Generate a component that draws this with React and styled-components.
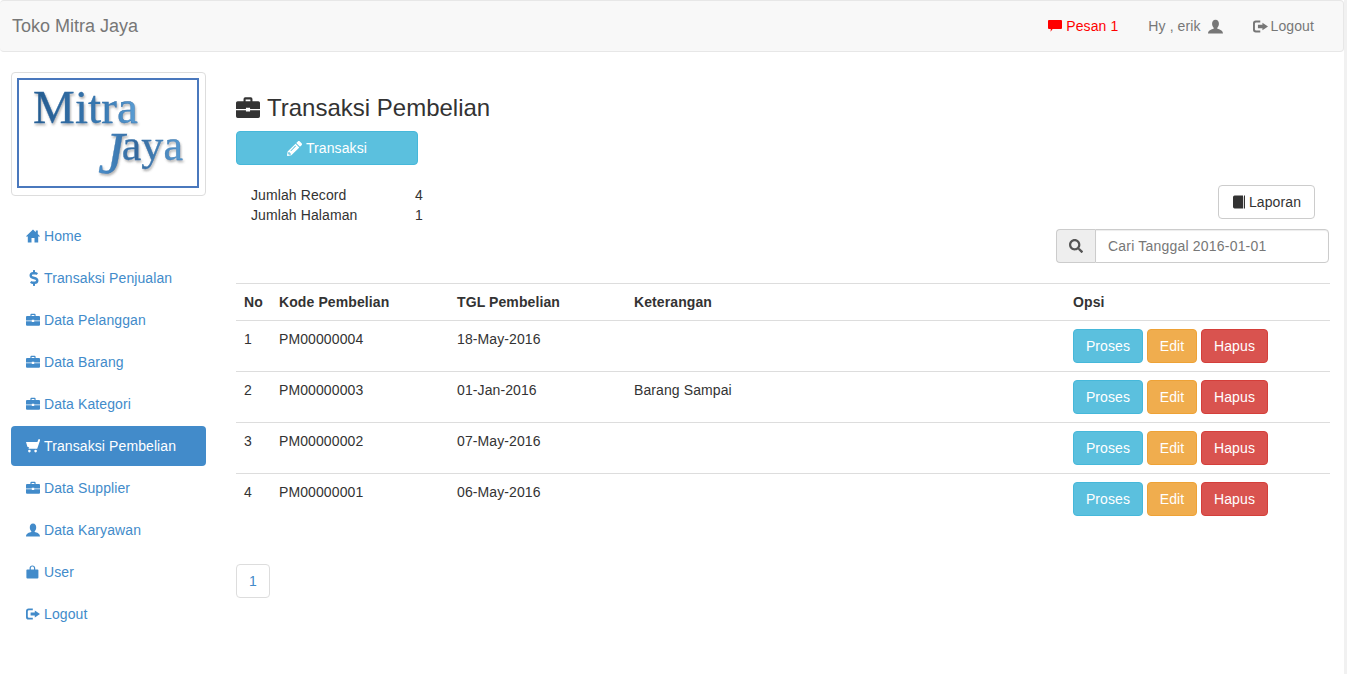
import React from "react";
import styled, { createGlobalStyle } from "styled-components";
import { FaDollarSign, FaPencilAlt, FaSearch } from "react-icons/fa";

const GlobalStyle = createGlobalStyle`
  * {
    box-sizing: border-box;
  }
  html {
    background: #f1f1f1;
  }
  body {
    margin: 0;
    width: 1344px;
    min-height: 100vh;
    background: #fff;
    color: #333;
    font-family: "Liberation Sans", Arial, sans-serif;
    font-size: 14px;
    line-height: 20px;
    letter-spacing: 0.1px;
  }
`;

const Glyph = ({ d, size = 14, color = "currentColor" }) => (
  <svg width={size} height={size} viewBox="0 0 14 14" fill={color} fillRule="evenodd">
    <path d={d} />
  </svg>
);

const ICONS = {
  home: "M7 0.6 L9.8 3.2 V1.4 H11.8 V5.1 L14.4 7.6 H12.2 V13.4 H8.5 V9 H5.5 V13.4 H1.8 V7.6 H-0.4 Z",
  briefcase:
    "M4.4 3 V1.8 Q4.4 0.8 5.4 0.8 H8.6 Q9.6 0.8 9.6 1.8 V3 H13 Q14 3 14 4 V7.6 H8.2 V6.8 H5.8 V7.6 H0 V4 Q0 3 1 3 Z M5.6 3 H8.4 V2 H5.6 Z M0 8.3 H5.8 V9 H8.2 V8.3 H14 V11.8 Q14 12.8 13 12.8 H1 Q0 12.8 0 11.8 Z",
  cart: "M0 3 H11.4 L12.4 0.2 H14.4 L11.2 9.8 H2.4 L3.2 8.4 L1.4 7.8 Z M3.4 10.8 A1.3 1.3 0 1 1 3.4 13.4 A1.3 1.3 0 1 1 3.4 10.8 Z M9.6 10.8 A1.3 1.3 0 1 1 9.6 13.4 A1.3 1.3 0 1 1 9.6 10.8 Z",
  user: "M7 0.6 C9.2 0.6 10.2 2.4 10.2 4.4 C10.2 6 9.5 7.4 8.7 8.2 V9 C10.8 9.6 14 10.4 14 13.6 H0 C0 10.4 3.2 9.6 5.3 9 V8.2 C4.5 7.4 3.8 6 3.8 4.4 C3.8 2.4 4.8 0.6 7 0.6 Z",
  bag: "M3.6 4.4 V3 C3.6 1.4 4.8 0.4 6.4 0.4 C8 0.4 9.2 1.4 9.2 3 V4.4 H11.6 Q12.4 4.4 12.4 5.2 V12.4 Q12.4 13.4 11.4 13.4 H1.4 Q0.4 13.4 0.4 12.4 V5.2 Q0.4 4.4 1.2 4.4 Z M4.8 4.4 H8 V3 C8 2.1 7.3 1.5 6.4 1.5 C5.5 1.5 4.8 2.1 4.8 3 Z",
  logout:
    "M0 4 Q0 1.4 2.6 1.4 H6.8 V3.2 H3 Q1.8 3.2 1.8 4.4 V9.6 Q1.8 10.8 3 10.8 H6.8 V12.6 H2.6 Q0 12.6 0 10 Z M8.8 3.4 L14 7 L8.8 10.6 V8.6 H4.6 V5.4 H8.8 Z",
  comment: "M1 1 H13 Q14 1 14 2 V9 Q14 10 13 10 H4.6 L2.6 12.8 L2.8 10 H1 Q0 10 0 9 V2 Q0 1 1 1 Z",
  book: "M2.6 0.6 H11 V13.4 H2.6 Q1 13.4 1 11.8 V2.2 Q1 0.6 2.6 0.6 Z M12 0.6 H13 V13.6 H11.8 V1.6 H12 Z",
};

const menu = [
  { icon: "home", label: "Home" },
  { icon: "dollar", label: "Transaksi Penjualan" },
  { icon: "briefcase", label: "Data Pelanggan" },
  { icon: "briefcase", label: "Data Barang" },
  { icon: "briefcase", label: "Data Kategori" },
  { icon: "cart", label: "Transaksi Pembelian", active: true },
  { icon: "briefcase", label: "Data Supplier" },
  { icon: "user", label: "Data Karyawan" },
  { icon: "bag", label: "User" },
  { icon: "logout", label: "Logout" },
];

const rows = [
  { no: 1, kode: "PM00000004", tgl: "18-May-2016", ket: "" },
  { no: 2, kode: "PM00000003", tgl: "01-Jan-2016", ket: "Barang Sampai" },
  { no: 3, kode: "PM00000002", tgl: "07-May-2016", ket: "" },
  { no: 4, kode: "PM00000001", tgl: "06-May-2016", ket: "" },
];

const Logo = () => (
  <svg width="184" height="114" viewBox="0 0 184 114">
    <defs>
      <linearGradient id="mitraBlue" x1="0" x2="1" y1="0" y2="0">
        <stop offset="0" stopColor="#255a8e" />
        <stop offset="0.7" stopColor="#3b7db6" />
        <stop offset="1" stopColor="#5c9fd6" />
      </linearGradient>
      <linearGradient id="jayaBlue" x1="0" x2="1" y1="0" y2="0">
        <stop offset="0" stopColor="#4a8fcb" />
        <stop offset="0.45" stopColor="#34689c" />
        <stop offset="1" stopColor="#5a9dd4" />
      </linearGradient>
      <filter id="soft" x="-5%" y="-5%" width="115%" height="125%">
        <feDropShadow dx="1" dy="2" stdDeviation="1.2" floodColor="#555" floodOpacity="0.45" />
      </filter>
    </defs>
    <rect x="2" y="2" width="180" height="108" fill="#fff" stroke="#4a78bd" strokeWidth="2" />
    <g filter="url(#soft)" fontFamily="'Liberation Serif', serif">
      <text x="17" y="46" fontSize="47" fill="url(#mitraBlue)" stroke="#2f6ca5" strokeWidth="0.3">Mitra</text>
      <text x="82" y="83" fontSize="44" fill="url(#jayaBlue)" stroke="#3a76ad" strokeWidth="0.3">
        <tspan fontSize="60" fontStyle="italic" dy="13">J</tspan>
        <tspan dy="-13" dx="-3">aya</tspan>
      </text>
    </g>
  </svg>
);

const App = () => (
  <>
    <GlobalStyle />
    <Navbar>
      <Brand>Toko Mitra Jaya</Brand>
      <NavLinks>
        <NavLink $alert>
          <Glyph d={ICONS.comment} />Pesan 1
        </NavLink>
        <NavLink>
          Hy , erik<Spaced><Glyph d={ICONS.user} size={15} /></Spaced>
        </NavLink>
        <NavLink>
          <Glyph d={ICONS.logout} size={15} />Logout
        </NavLink>
      </NavLinks>
    </Navbar>
    <Layout>
      <Sidebar>
        <Thumbnail>
          <Logo />
        </Thumbnail>
        <Pills>
          {menu.map((item) => (
            <Pill key={item.label} $active={item.active}>
              <PillIcon>
                {item.icon === "dollar" ? <FaDollarSign size={16} /> : <Glyph d={ICONS[item.icon]} />}
              </PillIcon>
              {item.label}
            </Pill>
          ))}
        </Pills>
      </Sidebar>
      <Main>
        <Title>
          <Glyph d={ICONS.briefcase} size={24} />Transaksi Pembelian
        </Title>
        <WideButton>
          <FaPencilAlt size={15} />Transaksi
        </WideButton>
        <Toolbar>
          <Stats>
            <StatLabel>Jumlah Record</StatLabel>
            <span>4</span>
            <StatLabel>Jumlah Halaman</StatLabel>
            <span>1</span>
          </Stats>
          <Tools>
            <ReportButton>
              <Glyph d={ICONS.book} />Laporan
            </ReportButton>
            <SearchGroup>
              <SearchAddon>
                <FaSearch size={14} />
              </SearchAddon>
              <SearchInput placeholder="Cari Tanggal 2016-01-01" />
            </SearchGroup>
          </Tools>
        </Toolbar>
        <Table>
          <colgroup>
            <col style={{ width: 35 }} />
            <col style={{ width: 178 }} />
            <col style={{ width: 177 }} />
            <col style={{ width: 439 }} />
            <col />
          </colgroup>
          <thead>
            <tr>
              <Th>No</Th>
              <Th>Kode Pembelian</Th>
              <Th>TGL Pembelian</Th>
              <Th>Keterangan</Th>
              <Th>Opsi</Th>
            </tr>
          </thead>
          <tbody>
            {rows.map((row) => (
              <Row key={row.no}>
                <Td>{row.no}</Td>
                <Td>{row.kode}</Td>
                <Td>{row.tgl}</Td>
                <Td>{row.ket}</Td>
                <Td>
                  <Actions>
                    <ActionButton $w={70} $bg="#5bc0de" $border="#46b8da">Proses</ActionButton>
                    <ActionButton $w={50} $bg="#f0ad4e" $border="#eea236">Edit</ActionButton>
                    <ActionButton $w={67} $bg="#d9534f" $border="#d43f3a">Hapus</ActionButton>
                  </Actions>
                </Td>
              </Row>
            ))}
          </tbody>
        </Table>
        <PageLink>1</PageLink>
      </Main>
    </Layout>
  </>
);

export default App;

const Navbar = styled.header`
  height: 52px;
  display: flex;
  align-items: center;
  justify-content: space-between;
  padding: 0 14px 0 12px;
  background-color: #f8f8f8;
  border: 1px solid #e7e7e7;
  border-left: 0;
  border-radius: 4px;
`;

const Brand = styled.div`
  font-size: 18px;
  letter-spacing: 0;
  color: #777;
`;

const NavLinks = styled.nav`
  display: flex;
  align-items: center;
`;

const NavLink = styled.a`
  display: flex;
  align-items: center;
  gap: ${(p) => (p.$alert ? "4px" : "3px")};
  padding: 0 15px;
  color: ${(p) => (p.$alert ? "#f00" : "#777")};
  white-space: pre;
`;

const Spaced = styled.span`
  display: inline-flex;
  margin-left: 4px;
`;

const Layout = styled.div`
  display: flex;
  align-items: flex-start;
  padding: 20px 14px 0 11px;
`;

const Sidebar = styled.aside`
  width: 195px;
  flex-shrink: 0;
`;

const Thumbnail = styled.div`
  height: 124px;
  padding: 4px;
  background: #fff;
  border: 1px solid #ddd;
  border-radius: 4px;
  line-height: 0;
`;

const Pills = styled.ul`
  list-style: none;
  margin: 20px 0 0;
  padding: 0;
  display: flex;
  flex-direction: column;
  gap: 2px;
`;

const Pill = styled.li`
  height: 40px;
  display: flex;
  align-items: center;
  padding: 0 15px;
  border-radius: 4px;
  color: ${(p) => (p.$active ? "#fff" : "#428bca")};
  background-color: ${(p) => (p.$active ? "#428bca" : "transparent")};
`;

const PillIcon = styled.span`
  width: 18px;
  display: inline-flex;
  justify-content: flex-start;
`;

const Main = styled.main`
  flex: 1;
  min-width: 0;
  margin-left: 30px;
  padding-top: 16px;
`;

const Title = styled.h3`
  margin: 0;
  height: 43px;
  padding-bottom: 4px;
  display: flex;
  align-items: center;
  gap: 7px;
  font-size: 24px;
  font-weight: 500;
  letter-spacing: 0;
  line-height: 26px;
  color: #333;
`;

const WideButton = styled.button`
  width: 182px;
  height: 34px;
  display: flex;
  align-items: center;
  justify-content: center;
  gap: 4px;
  padding: 0;
  font: inherit;
  letter-spacing: inherit;
  color: #fff;
  background-color: #5bc0de;
  border: 1px solid #46b8da;
  border-radius: 4px;
`;

const Toolbar = styled.div`
  display: flex;
  justify-content: space-between;
  align-items: flex-start;
  margin-top: 20px;
  height: 98px;
`;

const Stats = styled.div`
  display: grid;
  grid-template-columns: 164px auto;
  margin-left: 15px;
`;

const StatLabel = styled.span`
  white-space: nowrap;
`;

const Tools = styled.div`
  display: flex;
  flex-direction: column;
  align-items: flex-end;
  gap: 10px;
`;

const ReportButton = styled.button`
  width: 97px;
  height: 34px;
  margin-right: 15px;
  display: flex;
  align-items: center;
  justify-content: center;
  gap: 3px;
  padding: 0;
  font: inherit;
  letter-spacing: inherit;
  color: #333;
  background-color: #fff;
  border: 1px solid #ccc;
  border-radius: 4px;
`;

const SearchGroup = styled.div`
  width: 273px;
  height: 34px;
  margin-right: 1px;
  display: flex;
`;

const SearchAddon = styled.span`
  width: 39px;
  display: flex;
  align-items: center;
  justify-content: center;
  color: #555;
  background-color: #eee;
  border: 1px solid #ccc;
  border-right: 0;
  border-radius: 4px 0 0 4px;
`;

const SearchInput = styled.input`
  flex: 1;
  min-width: 0;
  padding: 6px 12px;
  font: inherit;
  letter-spacing: 0.2px;
  color: #555;
  border: 1px solid #ccc;
  border-radius: 0 4px 4px 0;
  box-shadow: inset 0 1px 1px rgba(0, 0, 0, 0.075);
  outline: none;
  &::placeholder {
    color: #777;
    opacity: 1;
  }
`;

const Table = styled.table`
  width: 100%;
  table-layout: fixed;
  border-collapse: collapse;
`;

const Th = styled.th`
  height: 37px;
  padding: 8px;
  text-align: left;
  font-weight: 700;
  border-top: 1px solid #ddd;
  border-bottom: 1px solid #ddd;
`;

const Td = styled.td`
  height: 51px;
  padding: 8px;
  vertical-align: top;
  border-bottom: 1px solid #ddd;
  &:last-child {
    padding-bottom: 7px;
  }
`;

const Row = styled.tr`
  &:last-child ${Td} {
    border-bottom: 0;
  }
`;

const Actions = styled.div`
  display: flex;
  gap: 4px;
`;

const ActionButton = styled.button`
  width: ${(p) => p.$w}px;
  height: 34px;
  padding: 0;
  font: inherit;
  letter-spacing: inherit;
  color: #fff;
  background-color: ${(p) => p.$bg};
  border: 1px solid ${(p) => p.$border};
  border-radius: 4px;
`;

const PageLink = styled.a`
  width: 34px;
  height: 34px;
  margin-top: 39px;
  display: flex;
  align-items: center;
  justify-content: center;
  color: #428bca;
  background-color: #fff;
  border: 1px solid #ddd;
  border-radius: 4px;
`;
